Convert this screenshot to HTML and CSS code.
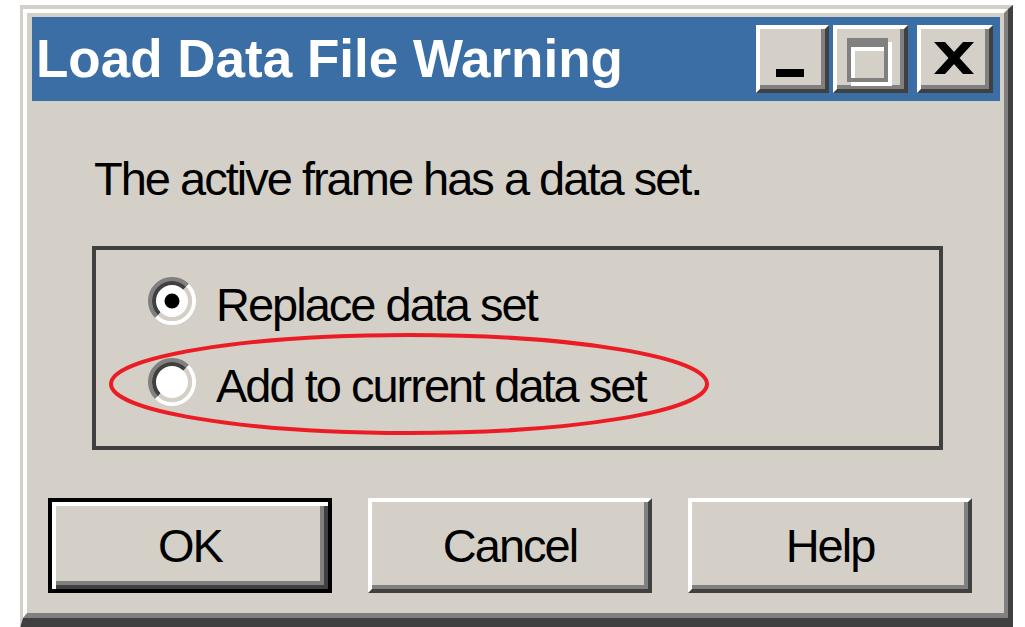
FILE: index.html
```html
<!DOCTYPE html>
<html>
<head>
<meta charset="utf-8">
<link rel="stylesheet" href="styles.css">
</head>
<body>
<div class="window">
  <div class="window-inner">
    <div class="titlebar">
      <span class="title">Load Data File Warning</span>
      <div class="caption-buttons">
        <button class="cap-btn cap-min" aria-label="Minimize">
          <svg viewBox="0 0 65 60" width="65" height="60"><rect x="16" y="40" width="28" height="8" fill="#000"/></svg>
        </button>
        <button class="cap-btn cap-max" aria-label="Maximize">
          <svg viewBox="0 0 67 60" width="67" height="60">
            <path fill="#fff" fill-rule="evenodd" d="M14 13H55V57H14Z M18 22H51V53H18Z"/>
            <path fill="#808080" fill-rule="evenodd" d="M10 9H51V53H10Z M14 18H47V49H14Z"/>
          </svg>
        </button>
        <button class="cap-btn cap-close" aria-label="Close">
          <svg viewBox="0 0 68 60" width="68" height="60">
            <polygon fill="#000" points="13,13 24,13 53,45 42,45"/>
            <polygon fill="#000" points="42,13 53,13 24,45 13,45"/>
          </svg>
        </button>
      </div>
    </div>

    <p class="message">The active frame has a data set.</p>

    <div class="groupbox">
      <div class="radio-row">
        <svg class="radio" viewBox="0 0 48 48" width="48" height="48">
          <circle cx="24" cy="24" r="17" fill="#fff"/>
          <path d="M8.44 39.56A22 22 0 0 1 39.56 8.44" stroke="#808080" stroke-width="4" fill="none"/>
          <path d="M39.56 8.44A22 22 0 0 1 8.44 39.56" stroke="#fff" stroke-width="4" fill="none"/>
          <path d="M11.27 36.73A18 18 0 0 1 36.73 11.27" stroke="#404040" stroke-width="4" fill="none"/>
          <path d="M36.73 11.27A18 18 0 0 1 11.27 36.73" stroke="#d4d0c8" stroke-width="4" fill="none"/>
          <circle cx="24" cy="24" r="7.5" fill="#000"/>
        </svg>
        <span class="radio-label">Replace data set</span>
      </div>
      <div class="radio-row">
        <svg class="radio" viewBox="0 0 48 48" width="48" height="48">
          <circle cx="24" cy="24" r="17" fill="#fff"/>
          <path d="M8.44 39.56A22 22 0 0 1 39.56 8.44" stroke="#808080" stroke-width="4" fill="none"/>
          <path d="M39.56 8.44A22 22 0 0 1 8.44 39.56" stroke="#fff" stroke-width="4" fill="none"/>
          <path d="M11.27 36.73A18 18 0 0 1 36.73 11.27" stroke="#404040" stroke-width="4" fill="none"/>
          <path d="M36.73 11.27A18 18 0 0 1 11.27 36.73" stroke="#d4d0c8" stroke-width="4" fill="none"/>
        </svg>
        <span class="radio-label">Add to current data set</span>
      </div>
    </div>

    <div class="buttons">
      <button class="btn btn-default">OK</button>
      <button class="btn">Cancel</button>
      <button class="btn">Help</button>
    </div>
  </div>
</div>

<svg class="highlight" viewBox="0 0 604 106" width="604" height="106">
  <ellipse cx="302" cy="53" rx="298" ry="49" fill="none" stroke="#ec1c24" stroke-width="4"/>
</svg>
</body>
</html>
```

FILE: styles.css
```css
* {
  box-sizing: border-box;
}

html, body {
  margin: 0;
  padding: 0;
  background: #ffffff;
}

body {
  font-family: "Liberation Sans", Arial, sans-serif;
  color: #000;
  overflow: hidden;
  height: 627px;
}

.window {
  margin: 5px 0 0 20px;
  width: 993px;
  border-style: solid;
  border-width: 4px 5px 10px 3px;
  border-color: #d4d0c8 #404040 #404040 #d4d0c8;
  background: #d4d0c8;
}

.window-inner {
  border-style: solid;
  border-width: 4px 4px 5px 4px;
  border-color: #ffffff #808080 #808080 #ffffff;
  padding: 4px 4px 20px 5px;
  background: #d4d0c8;
}

.titlebar {
  height: 84px;
  background: #3a6ea5;
  display: flex;
  align-items: center;
  padding: 0 7px 0 4px;
}

.title {
  color: #fff;
  font-weight: bold;
  font-size: 53px;
  line-height: 84px;
  white-space: nowrap;
}

.caption-buttons {
  margin-left: auto;
  display: flex;
  align-items: center;
}

.cap-btn {
  appearance: none;
  -webkit-appearance: none;
  height: 68px;
  padding: 0;
  margin: 0;
  background: #d4d0c8;
  border-style: solid;
  border-width: 4px;
  border-color: #ffffff #404040 #404040 #ffffff;
  box-shadow: inset -4px -4px 0 0 #808080;
  display: block;
}

.cap-btn svg {
  display: block;
}

.cap-min {
  width: 73px;
}

.cap-max {
  width: 75px;
  margin-left: 4px;
}

.cap-close {
  width: 76px;
  margin-left: 9px;
}

.message {
  margin: 54px 0 0 62px;
  font-size: 47px;
  line-height: 47px;
  letter-spacing: -2px;
  white-space: nowrap;
}

.groupbox {
  margin: 44px 0 0 60px;
  width: 851px;
  border: 4px solid #404040;
  padding: 27px 0 36px 52px;
  display: flex;
  flex-direction: column;
  gap: 29px;
}

.radio-row {
  display: flex;
  align-items: flex-start;
  gap: 20px;
  height: 52px;
}

.radio {
  display: block;
  flex: none;
}

.radio-label {
  font-size: 47px;
  line-height: 48px;
  letter-spacing: -2px;
  margin-top: 4px;
  white-space: nowrap;
}

.buttons {
  margin: 48px 0 0 16px;
  display: flex;
  gap: 36px;
}

.btn {
  appearance: none;
  -webkit-appearance: none;
  width: 284px;
  height: 95px;
  margin: 0;
  padding: 0;
  background: #d4d0c8;
  font-family: "Liberation Sans", Arial, sans-serif;
  font-size: 47px;
  letter-spacing: -2px;
  color: #000;
  border-style: solid;
  border-width: 4px;
  border-color: #ffffff #404040 #404040 #ffffff;
  box-shadow: inset -4px -4px 0 0 #808080;
  display: flex;
  align-items: center;
  justify-content: center;
}

.btn-default {
  border: 4px solid #000;
  box-shadow: inset 4px 4px 0 0 #ffffff, inset -4px -4px 0 0 #404040, inset -8px -8px 0 0 #808080;
}

.highlight {
  position: absolute;
  left: 107px;
  top: 331px;
}
```
